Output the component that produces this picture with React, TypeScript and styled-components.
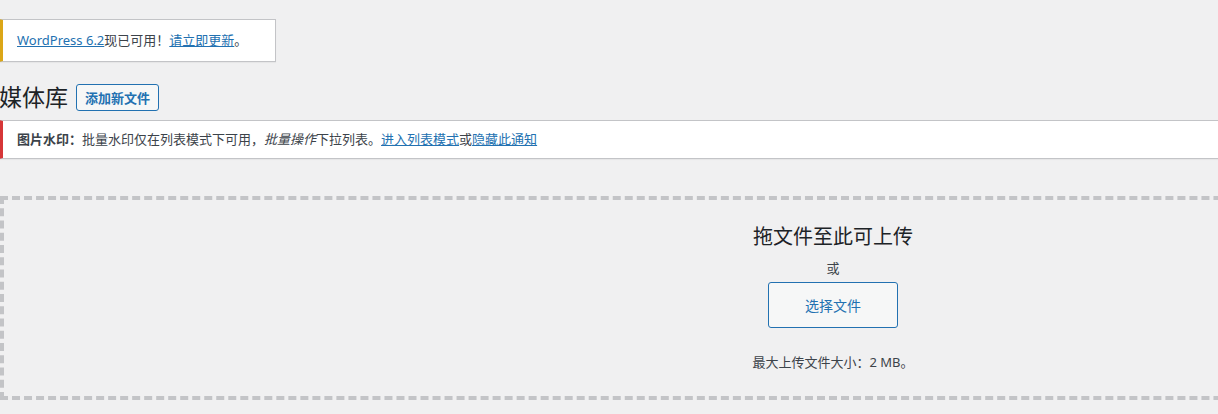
import React from "react";
import styled, { createGlobalStyle } from "styled-components";

const Global = createGlobalStyle`
  html, body {
    margin: 0;
    padding: 0;
    background: #f0f0f1;
    overflow: hidden;
  }
  body {
    font-family: "Segoe UI", "Noto Sans", "Noto Sans CJK SC", sans-serif;
    font-size: 13px;
    color: #3c434a;
    line-height: 1.4em;
  }
`;

const Wrap = styled.div`
  width: 1666px;
  display: flex;
  flex-direction: column;
  align-items: flex-start;
`;

const Notice = styled.div<{ $accent: string; $full?: boolean }>`
  box-sizing: border-box;
  margin-left: -1px;
  width: ${(p) => (p.$full ? "100%" : "fit-content")};
  background: #fff;
  border: 1px solid #c3c4c7;
  border-left: 4px solid ${(p) => p.$accent};
  box-shadow: 0 1px 1px rgba(0, 0, 0, 0.04);
  padding: 0 28px 0 14px;
  display: flex;
  align-items: center;
`;

const UpdateNotice = styled(Notice)`
  margin-top: 19px;
  height: 43px;
`;

const WatermarkNotice = styled(Notice)`
  margin-top: 9px;
  height: 39px;
`;

const Link = styled.a`
  color: #2271b1;
  text-decoration: underline;
`;

const Strong = styled.strong`
  font-weight: 600;
  color: #3c434a;
`;

const Em = styled.em`
  font-style: italic;
`;

const TitleRow = styled.div`
  margin-top: 22px;
  display: flex;
  align-items: center;
  gap: 8px;
  height: 27px;
`;

const Title = styled.h1`
  margin: 0;
  margin-left: -1px;
  font-size: 23px;
  font-weight: 400;
  line-height: 27px;
  color: #1d2327;
`;

const AddButton = styled.button`
  box-sizing: border-box;
  height: 27px;
  padding: 0 8px;
  border: 1px solid #2271b1;
  border-radius: 3px;
  background: #f6f7f7;
  color: #2271b1;
  font-family: inherit;
  font-size: 13px;
  font-weight: 600;
  cursor: pointer;
`;

const DropZone = styled.div`
  box-sizing: border-box;
  margin-top: 37px;
  width: 100%;
  height: 204px;
  border: 4px dashed #c3c4c7;
  display: flex;
  flex-direction: column;
  align-items: center;
  padding-top: 23px;
`;

const DropTitle = styled.h2`
  margin: 0;
  font-size: 20px;
  font-weight: 400;
  line-height: 28px;
  color: #1d2327;
`;

const Or = styled.p`
  margin: 7px 0 0;
  line-height: 20px;
  font-size: 13px;
`;

const SelectButton = styled.button`
  box-sizing: border-box;
  margin-top: 4px;
  width: 130px;
  height: 46px;
  border: 1px solid #2271b1;
  border-radius: 3px;
  background: #f6f7f7;
  color: #2271b1;
  font-family: inherit;
  font-size: 14px;
  cursor: pointer;
`;

const MaxSize = styled.p`
  margin: 24px 0 0;
  line-height: 20px;
  font-size: 13px;
`;

export default function App() {
  return (
    <>
      <Global />
      <Wrap>
        <UpdateNotice $accent="#dba617">
          <span>
            <Link href="#">WordPress 6.2</Link>现已可用！<Link href="#">请立即更新</Link>。
          </span>
        </UpdateNotice>
        <TitleRow>
          <Title>媒体库</Title>
          <AddButton>添加新文件</AddButton>
        </TitleRow>
        <WatermarkNotice $accent="#d63638" $full>
          <span>
            <Strong>图片水印：</Strong>批量水印仅在列表模式下可用，<Em>批量操作</Em>下拉列表。
            <Link href="#">进入列表模式</Link>或<Link href="#">隐藏此通知</Link>
          </span>
        </WatermarkNotice>
        <DropZone>
          <DropTitle>拖文件至此可上传</DropTitle>
          <Or>或</Or>
          <SelectButton>选择文件</SelectButton>
          <MaxSize>最大上传文件大小：2 MB。</MaxSize>
        </DropZone>
      </Wrap>
    </>
  );
}
